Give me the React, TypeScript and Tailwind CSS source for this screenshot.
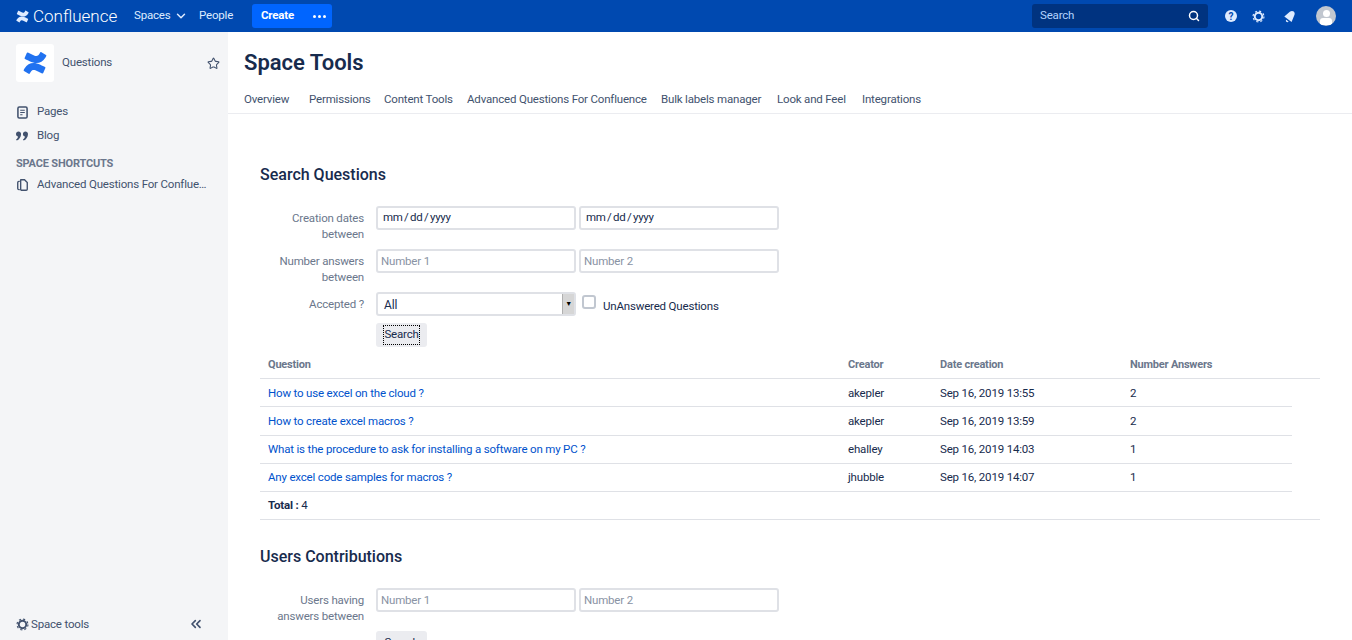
import { ChevronDown, ChevronsLeft, Search, Star } from 'lucide-react';
import type { ReactNode } from 'react';

const tabs = [
  { label: 'Overview', width: 'w-[49px]' },
  { label: 'Permissions', width: 'w-[59px]' },
  { label: 'Content Tools', width: 'w-[67px]' },
  { label: 'Advanced Questions For Confluence', width: 'w-[178px]' },
  { label: 'Bulk labels manager', width: 'w-[100px]' },
  { label: 'Look and Feel', width: 'w-[69px]' },
  { label: 'Integrations', width: 'w-[59px]' },
];

const questions = [
  { title: 'How to use excel on the cloud ?', creator: 'akepler', date: 'Sep 16, 2019 13:55', answers: 2 },
  { title: 'How to create excel macros ?', creator: 'akepler', date: 'Sep 16, 2019 13:59', answers: 2 },
  { title: 'What is the procedure to ask for installing a software on my PC ?', creator: 'ehalley', date: 'Sep 16, 2019 14:03', answers: 1 },
  { title: 'Any excel code samples for macros ?', creator: 'jhubble', date: 'Sep 16, 2019 14:07', answers: 1 },
];

function ConfluenceMark({ className }: { className: string }) {
  return (
    <svg viewBox="0 0 24 24" className={className}>
      <path d="M1.500 17.600c-.3.4-.5.9-.8 1.300-.2.4-.1.9.3 1.100l4.600 2.800c.4.3.9.1 1.200-.3.2-.3.4-.7.7-1.200 1.800-3 3.700-2.600 7-1l4.600 2.200c.4.2.9 0 1.100-.4l2.200-5c.2-.4 0-.9-.4-1.100-1-.4-2.900-1.400-4.600-2.200-6.100-3-12-2.700-15.900 3.800z" />
      <path d="M22.500 6.400c.3-.4.5-.9.8-1.300.2-.4.1-.9-.3-1.100L18.400 1.200c-.4-.3-.9-.1-1.200.3-.2.3-.4.7-.7 1.200-1.800 3-3.700 2.600-7 1L4.900 1.500c-.4-.2-.9 0-1.100.4l-2.200 5c-.2.4 0 .9.4 1.100 1 .4 2.900 1.400 4.600 2.200 6.100 3 12 2.700 15.900-3.800z" />
    </svg>
  );
}

// ring with eight short teeth, the gear used in the top bar and sidebar footer
function Gear({ className }: { className: string }) {
  return (
    <svg viewBox="0 0 16 16" className={className} fill="none" stroke="currentColor">
      <circle cx="8" cy="8" r="4.600" strokeWidth="2.400" />
      <circle cx="8" cy="8" r="6.700" strokeWidth="1.400" strokeDasharray="2.600 2.660" />
    </svg>
  );
}

function Bell({ className }: { className: string }) {
  return (
    <svg viewBox="0 0 16 16" className={className} fill="currentColor">
      <path d="M1.500 8.600 7.800 3.200c1.300-1.200 3.300-1.300 4.500-.3 1.300 1.200 1.400 3.200.4 4.700l-2.900 7.300z" />
      <path d="M3.800 12.300l2.700 2.200c-.9.800-2 .7-2.700 0-.7-.6-.7-1.500 0-2.200z" />
    </svg>
  );
}

function PageIcon({ className }: { className: string }) {
  return (
    <svg viewBox="0 0 12 14" className={className} fill="none" stroke="currentColor">
      <rect x="1" y="1" width="10" height="12" rx="1.500" strokeWidth="1.700" />
      <path d="M3.500 4.500h5M3.500 7h5M3.500 9.500h2.500" strokeWidth="1.200" />
    </svg>
  );
}

function QuoteIcon({ className }: { className: string }) {
  return (
    <svg viewBox="0 0 13 10" className={className} fill="currentColor">
      <path d="M2.700 0C4.300 0 5.500 1.200 5.500 2.800 5.500 6 3.400 9 .8 10L0 8.900c1.200-.7 2-1.700 2.200-3.300C.9 5.400 0 4.300 0 2.800 0 1.200 1.200 0 2.700 0z" />
      <path d="M10.200 0C11.800 0 13 1.200 13 2.800 13 6 10.900 9 8.300 10l-.8-1.100c1.200-.7 2-1.700 2.200-3.300C8.400 5.400 7.500 4.300 7.500 2.800 7.500 1.200 8.700 0 10.200 0z" />
    </svg>
  );
}

function CopyIcon({ className }: { className: string }) {
  return (
    <svg viewBox="0 0 12 13" className={className} fill="none" stroke="currentColor" strokeWidth="1.500">
      <path d="M3 2.500H2A1.200 1.200 0 0 0 .8 3.700v6.600A1.200 1.200 0 0 0 2 11.500h1" />
      <path d="M4.200.8h4l3 3v7.200a1.200 1.200 0 0 1-1.200 1.200H5.200A1.200 1.200 0 0 1 4 11V1z" fill="#f4f5f7" />
    </svg>
  );
}

function FieldLabel({ children }: { children: ReactNode }) {
  return <div className="mt-[4px] w-[104px] shrink-0 text-right leading-[16px] text-[#6b778c]">{children}</div>;
}

function NumberInput({ placeholder }: { placeholder: string }) {
  return (
    <input
      placeholder={placeholder}
      readOnly
      className="h-6 w-[200px] rounded-[3px] border-2 border-[#dfe1e6] bg-white px-[3px] text-[11.5px] text-[#172b4d] outline-none placeholder:text-[#8993a4]"
    />
  );
}

function DateInput() {
  return (
    <div className="flex h-6 w-[200px] items-center rounded-[3px] border-2 border-[#dfe1e6] bg-white px-[5px] text-[11.5px] tracking-[-0.3px] text-[#172b4d] [word-spacing:-1px]">
      mm / dd / yyyy
    </div>
  );
}

export default function App() {
  return (
    <div
      className="flex h-screen flex-col overflow-hidden bg-white text-[11.5px] tracking-[-0.18px] text-[#172b4d]"
      style={{ fontFamily: 'Roboto, "Noto Sans", sans-serif' }}
    >
      {/* top bar */}
      <header className="flex h-8 shrink-0 items-center bg-[#0049b0] text-[#deebff]">
        <div className="ml-4 flex w-[118px] items-center gap-[4px] text-white">
          <ConfluenceMark className="h-[13px] w-[13px] fill-[#deebff]" />
          <span className="text-[17px] font-light leading-none tracking-normal">Confluence</span>
        </div>
        <div className="flex w-[65px] items-center gap-[3px]">
          <span>Spaces</span>
          <ChevronDown className="h-3.5 w-3.5" strokeWidth={2.5} />
        </div>
        <span className="w-[53px]">People</span>
        <div className="flex h-6 w-20 items-center rounded-[3px] bg-[#0065ff] pl-[9px] font-bold text-white">
          Create
          <span className="ml-[19px] flex gap-[2px]">
            <i className="h-[3px] w-[3px] rounded-full bg-white" />
            <i className="h-[3px] w-[3px] rounded-full bg-white" />
            <i className="h-[3px] w-[3px] rounded-full bg-white" />
          </span>
        </div>
        <div className="ml-auto flex h-6 w-[176px] items-center justify-between rounded-[3px] bg-[#003380] pl-2 pr-2 text-[#b3d4ff]">
          Search
          <Search className="h-3 w-3 text-white" strokeWidth={3} />
        </div>
        <div className="ml-[17px] flex h-3 w-3 items-center justify-center rounded-full bg-[#deebff] text-[10px] font-bold text-[#0049b0]">?</div>
        <Gear className="ml-[15px] h-[13px] w-[13px] text-[#deebff]" />
        <Bell className="ml-[18px] h-[14px] w-[14px] text-[#deebff]" />
        <div className="ml-[19px] mr-[16px] flex h-5 w-5 flex-col items-center overflow-hidden rounded-full bg-[#c1c7d0]">
          <i className="mt-[4px] h-[7px] w-[7px] rounded-full bg-white" />
          <i className="mt-[1px] h-[7px] w-[12px] rounded-t-[3px] bg-white" />
        </div>
      </header>

      <div className="flex min-h-0 flex-1">
        {/* sidebar */}
        <aside className="flex w-[228px] shrink-0 flex-col bg-[#f4f5f7] pl-4 pr-2 text-[#42526e]">
          <div className="mt-[12px] flex items-center">
            <div className="flex h-[38px] w-[38px] items-center justify-center rounded-[3px] bg-white">
              <ConfluenceMark className="h-6 w-6 fill-[#2172f0]" />
            </div>
            <span className="ml-2">Questions</span>
            <Star className="ml-auto h-[13px] w-[13px]" strokeWidth={2} />
          </div>
          <div className="mt-[18px] flex h-6 items-center gap-[9px]">
            <PageIcon className="ml-[1px] h-[13px] w-[11px]" />
            Pages
          </div>
          <div className="flex h-6 items-center gap-[9px]">
            <QuoteIcon className="h-[10px] w-[12px]" />
            Blog
          </div>
          <div className="mt-[8px] text-[11px] font-bold leading-4 text-[#6b778c]">SPACE SHORTCUTS</div>
          <div className="mt-[4px] flex items-center gap-[9px]">
            <CopyIcon className="ml-[1px] h-[12px] w-[11px]" />
            <span className="w-[173px] truncate">Advanced Questions For Confluence</span>
          </div>
          <div className="mb-[7px] mt-auto flex items-center pr-4">
            <Gear className="h-[13px] w-[13px]" />
            <span className="ml-[2px]">Space tools</span>
            <ChevronsLeft className="ml-auto h-4 w-4" strokeWidth={2.5} />
          </div>
        </aside>

        {/* main */}
        <main className="min-w-0 flex-1">
          <div className="h-[82px] border-b border-[#ebecf0] pl-4">
            <h1 className="pt-[15px] text-[22px] font-semibold leading-[32px] tracking-normal text-[#172b4d]">Space Tools</h1>
            <nav className="mt-[12px] flex gap-4 text-[#42526e]">
              {tabs.map(tab => (
                <span key={tab.label} className={`${tab.width} whitespace-nowrap leading-[16px]`}>{tab.label}</span>
              ))}
            </nav>
          </div>

          <div className="pl-8 pr-8">
            <h2 className="mt-[49px] text-[16px] font-medium leading-[24px] tracking-normal">Search Questions</h2>

            <div className="mt-[19px] flex gap-[12px]">
              <FieldLabel>Creation dates between</FieldLabel>
              <div className="flex gap-[3px]">
                <DateInput />
                <DateInput />
              </div>
            </div>
            <div className="mt-[7px] flex gap-[12px]">
              <FieldLabel>Number answers between</FieldLabel>
              <div className="flex gap-[3px]">
                <NumberInput placeholder="Number 1" />
                <NumberInput placeholder="Number 2" />
              </div>
            </div>
            <div className="mt-[7px] flex gap-[12px]">
              <FieldLabel>Accepted ?</FieldLabel>
              <div className="flex h-6 w-[200px] items-center justify-between rounded-[3px] border-2 border-[#dfe1e6] pl-[6px] text-[12px]">
                <span className="mt-[1px]">All</span>
                <span className="flex h-full w-[12px] items-center justify-center border-l border-[#b0b0b0] bg-[#d6d6d6] text-[7px] text-black">▼</span>
              </div>
              <div className="ml-[-6px] flex items-start">
                <span className="mt-[3px] h-[14px] w-[14px] rounded-[3px] border-2 border-[#c1c7d0] bg-white" />
                <span className="ml-[7px] mt-[6px] leading-4">UnAnswered Questions</span>
              </div>
            </div>
            <div className="ml-[116px] mt-[7px] flex h-6 w-[51px] items-center justify-center rounded-[3px] bg-[#ebecf0]">
              <span className="outline-1 outline-dotted outline-black">Search</span>
            </div>

            {/* results */}
            <div className="mt-[6px] flex h-[26px] items-center border-b border-[#dfe1e6] pl-2 text-[11px] font-bold tracking-[-0.2px] text-[#6b778c]">
              <span className="w-[580px]">Question</span>
              <span className="w-[92px]">Creator</span>
              <span className="w-[190px]">Date creation</span>
              <span>Number Answers</span>
            </div>
            {questions.map(q => (
              <div key={q.title} className="mr-7 flex h-[28.250px] items-center border-b border-[#dfe1e6] pl-2 pt-[1px]">
                <span className="w-[580px] text-[#0052cc]">{q.title}</span>
                <span className="w-[92px]">{q.creator}</span>
                <span className="w-[190px]">{q.date}</span>
                <span>{q.answers}</span>
              </div>
            ))}
            <div className="flex h-[28px] items-center border-b border-[#dfe1e6] pl-2 pt-[1px]">
              <b>Total :</b>&nbsp;4
            </div>

            <h2 className="mt-[25px] text-[16px] font-medium leading-[24px] tracking-normal">Users Contributions</h2>
            <div className="mt-[19px] flex gap-[12px]">
              <FieldLabel>Users having answers between</FieldLabel>
              <div className="flex gap-[3px]">
                <NumberInput placeholder="Number 1" />
                <NumberInput placeholder="Number 2" />
              </div>
            </div>
            <div className="ml-[116px] mt-[7px] flex h-6 w-[51px] items-center justify-center rounded-[3px] bg-[#ebecf0]">Search</div>
          </div>
        </main>
      </div>
    </div>
  );
}
